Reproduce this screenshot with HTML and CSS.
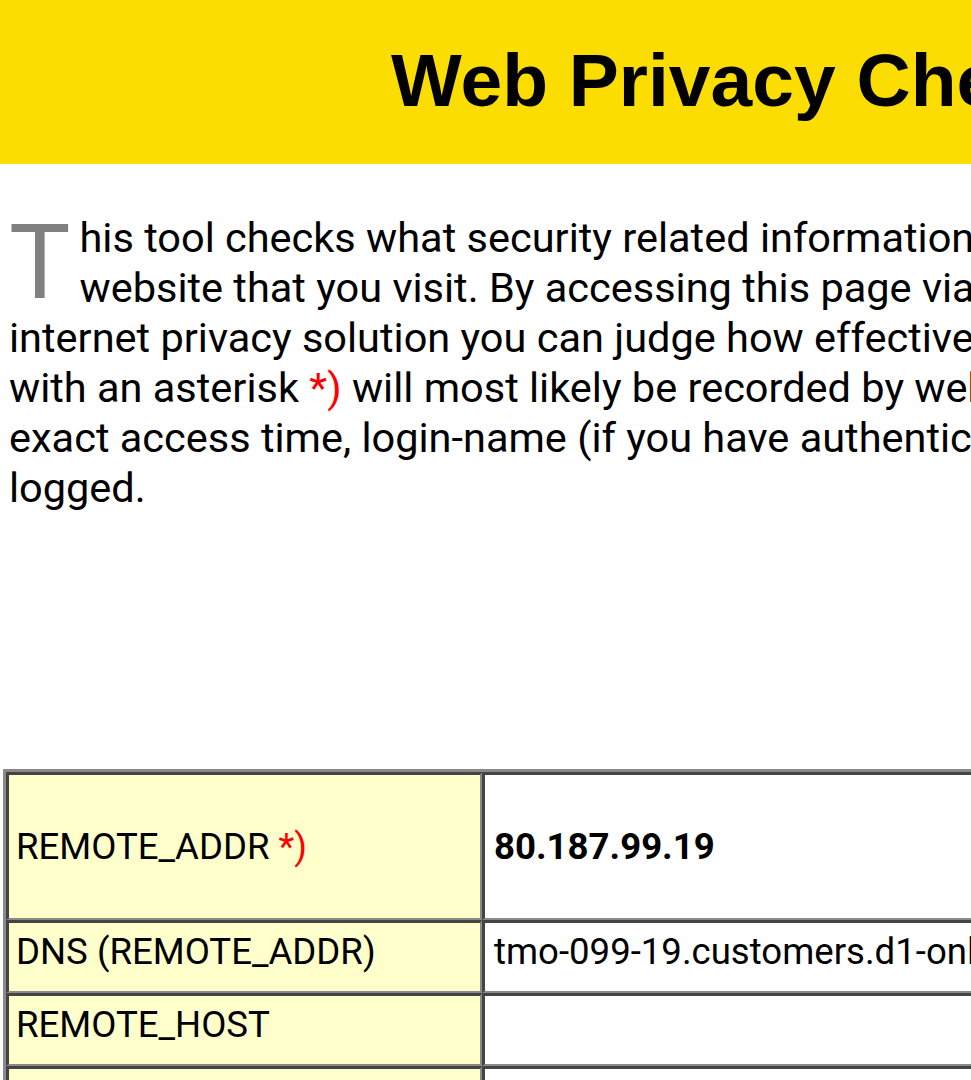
FILE: index.html
```html
<!DOCTYPE html>
<html lang="en">
<head>
    <meta charset="UTF-8">
    <meta name="viewport" content="width=device-width, initial-scale=1.0">
    <title>Web Privacy Check</title>
    <link rel="stylesheet" href="styles.css">
</head>
<body>
  <div id="page">
    <div id="header">
        <h1 class="title">Web Privacy Check</h1>
    </div>

    <p class="intro"><span class="dropcap">T</span>his tool checks what security related information your browser reveals to each<br>
    website that you visit. By accessing this page via an anonymous proxy or other<br>
    internet privacy solution you can judge how effective it is. The items marked<br>
    with an asterisk <span class="mark">*)</span> will most likely be recorded by webservers in their logfiles:<br>
    exact access time, login-name (if you have authenticated) and the requested URL are<br>
    logged.</p>

    <table class="infoTable">
        <tr class="tallRow">
            <td class="label">REMOTE_ADDR <span class="mark">*)</span></td>
            <td class="value"><strong>80.187.99.19</strong></td>
        </tr>
        <tr>
            <td class="label">DNS (REMOTE_ADDR)</td>
            <td class="value">tmo-099-19.customers.d1-online.com</td>
        </tr>
        <tr>
            <td class="label">REMOTE_HOST</td>
            <td class="value"></td>
        </tr>
        <tr>
            <td class="label">REMOTE_PORT</td>
            <td class="value">48212</td>
        </tr>
    </table>
  </div>
</body>
</html>
```

FILE: styles.css
```css
body {
    margin: 0;
    padding: 0;
    background-color: #ffffff;
    font-family: 'Roboto', sans-serif;
    color: #000000;
}

#page {
    width: 100%;
    overflow: hidden;
}

#header {
    height: 164px;
    box-sizing: border-box;
    padding: 43px 0 0 391px;
    background-color: #fcdd02;
    white-space: nowrap;
}

.title {
    margin: 0;
    font-family: 'Liberation Sans', Arial, sans-serif;
    font-size: 75px;
    line-height: 75px;
    font-weight: bold;
}

.intro {
    margin: 49px 0 0 0;
    padding-left: 9px;
    font-size: 41.5px;
    line-height: 50px;
    white-space: nowrap;
}

.dropcap {
    float: left;
    font-size: 103px;
    line-height: 100px;
    height: 100px;
    color: #808080;
    margin-right: 9px;
}

.mark {
    color: #ff0000;
}

.infoTable {
    margin: 256px 0 0 3px;
    width: 1400px;
    border-spacing: 0;
    border-top: 3px solid #8a8a8a;
    border-left: 3px solid #8a8a8a;
    border-right: 3px solid #444444;
    border-bottom: 3px solid #444444;
    font-size: 36.6px;
    white-space: nowrap;
}

.infoTable td {
    height: 73px;
    box-sizing: border-box;
    padding: 7px 10px 0 9px;
    border-top: 3px solid #444444;
    border-left: 3px solid #444444;
    border-right: 2px solid #8a8a8a;
    border-bottom: 2px solid #8a8a8a;
    vertical-align: top;
}

.infoTable .tallRow td {
    height: 148px;
    padding-top: 0;
    vertical-align: middle;
}

.infoTable .label {
    width: 476px;
    padding-left: 7px;
    background-color: #ffffcc;
}

.value {
    background-color: #ffffff;
}
```
